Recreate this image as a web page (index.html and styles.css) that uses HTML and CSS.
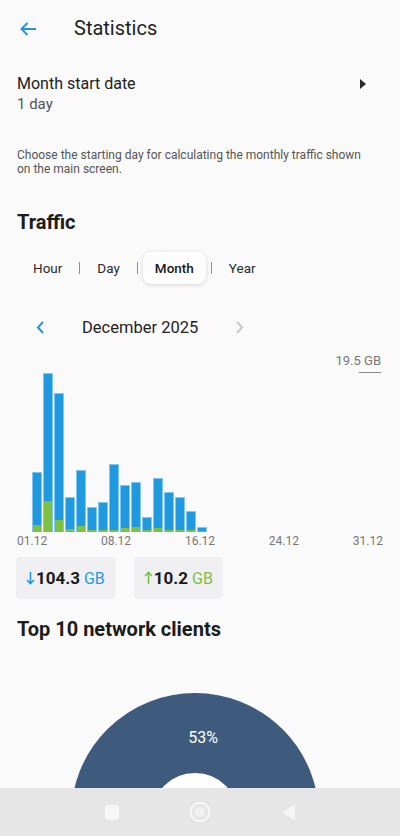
FILE: index.html
```html
<!DOCTYPE html>
<html lang="en">
<head>
<meta charset="utf-8">
<title>Statistics</title>
<link rel="stylesheet" href="styles.css">
</head>
<body>
<header class="appbar">
  <svg class="back" width="18" height="14" viewBox="0 0 18 14"><path d="M17 7H2.5M8.5 1L2.5 7l6 6" fill="none" stroke="#2594d9" stroke-width="2"/></svg>
  <h1 class="title">Statistics</h1>
</header>

<section class="setting">
  <div class="setting-text">
    <div class="setting-name">Month start date</div>
    <div class="setting-value">1 day</div>
  </div>
  <svg class="caret" width="6" height="10" viewBox="0 0 6 10"><polygon points="0,0 6,5 0,10" fill="#2b2b2b"/></svg>
</section>
<p class="hint">Choose the starting day for calculating the monthly traffic shown on the main screen.</p>

<h2 class="section-title traffic">Traffic</h2>
<nav class="tabs">
  <span class="tab">Hour</span><span class="sep"></span>
  <span class="tab">Day</span><span class="sep"></span>
  <span class="tab active">Month</span><span class="sep"></span>
  <span class="tab">Year</span>
</nav>

<div class="period">
  <svg class="chev" width="9" height="13" viewBox="0 0 9 13"><polyline points="7,1 2,6.5 7,12" fill="none" stroke="#2594d9" stroke-width="2"/></svg>
  <span class="period-label">December 2025</span>
  <svg class="chev next" width="9" height="13" viewBox="0 0 9 13"><polyline points="2,1 7,6.5 2,12" fill="none" stroke="#c9cacf" stroke-width="2"/></svg>
</div>

<div class="chart">
  <div class="ymax"><span class="ymax-label">19.5 GB</span></div>
  <div class="plot">
    <div class="bar" style="height:60px"><div class="up" style="height:7px"></div></div>
    <div class="bar" style="height:159px"><div class="up" style="height:31px"></div></div>
    <div class="bar" style="height:139px"><div class="up" style="height:12px"></div></div>
    <div class="bar" style="height:35px"><div class="up" style="height:3px"></div></div>
    <div class="bar" style="height:62px"><div class="up" style="height:6px"></div></div>
    <div class="bar" style="height:25px"><div class="up" style="height:2px"></div></div>
    <div class="bar" style="height:30px"><div class="up" style="height:2px"></div></div>
    <div class="bar" style="height:68px"><div class="up" style="height:2px"></div></div>
    <div class="bar" style="height:47px"><div class="up" style="height:4px"></div></div>
    <div class="bar" style="height:50px"><div class="up" style="height:5px"></div></div>
    <div class="bar" style="height:15px"><div class="up" style="height:2px"></div></div>
    <div class="bar" style="height:54px"><div class="up" style="height:4px"></div></div>
    <div class="bar" style="height:40px"><div class="up" style="height:2px"></div></div>
    <div class="bar" style="height:35px"><div class="up" style="height:2px"></div></div>
    <div class="bar" style="height:21px"><div class="up" style="height:2px"></div></div>
    <div class="bar" style="height:5px"><div class="up" style="height:1px"></div></div>
  </div>
  <div class="xlabels">
    <span>01.12</span><span>08.12</span><span>16.12</span><span>24.12</span><span>31.12</span>
  </div>
</div>

<div class="totals">
  <div class="total">
    <svg class="arrow" width="9" height="14" viewBox="0 0 9 14"><path d="M4.5 1v11.5M1 9l3.5 3.6L8 9" fill="none" stroke="#2594d9" stroke-width="1.6"/></svg>
    <span class="num">104.3</span><span class="unit down">GB</span>
  </div>
  <div class="total">
    <svg class="arrow" width="9" height="14" viewBox="0 0 9 14"><path d="M4.5 13V1.5M1 5l3.5-3.6L8 5" fill="none" stroke="#7cc142" stroke-width="1.6"/></svg>
    <span class="num">10.2</span><span class="unit upc">GB</span>
  </div>
</div>

<h2 class="section-title clients">Top 10 network clients</h2>
<div class="donut-wrap">
  <svg class="donut" width="400" height="200" viewBox="0 0 400 200">
    <circle cx="195" cy="176" r="44" fill="#ffffff"/>
    <circle cx="195" cy="176" r="84" fill="none" stroke="#3e5a7d" stroke-width="80"/>
    <text x="203" y="102" text-anchor="middle" class="pct">53%</text>
  </svg>
</div>

<footer class="navbar">
  <span class="nav-item"><svg width="16" height="17" viewBox="0 0 16 17"><rect x="1" y="1" width="14" height="15" rx="2" fill="#f6f6f6"/></svg></span>
  <span class="nav-item"><svg width="24" height="24" viewBox="0 0 24 24"><circle cx="12" cy="12" r="9.3" fill="none" stroke="#f6f6f6" stroke-width="2.4"/><circle cx="12" cy="12" r="5.6" fill="#f1f1f1"/></svg></span>
  <span class="nav-item"><svg width="15" height="19" viewBox="0 0 15 19"><polygon points="14,1 14,18 1,9.5" fill="#f6f6f6"/></svg></span>
</footer>
</body>
</html>
```

FILE: styles.css
```css
* { box-sizing: border-box; }
html, body { margin: 0; padding: 0; }
body {
  background: #fafafa;
  font-family: Roboto, "Noto Sans", "Liberation Sans", sans-serif;
  color: #212121;
  overflow: hidden;
  height: 836px;
}

.appbar {
  height: 56px;
  display: flex;
  align-items: center;
  padding-left: 19px;
}
.back { margin-right: 37px; margin-top: 2px; }
.title {
  margin: 0;
  font-size: 20px;
  font-weight: 400;
  color: #1f1f1f;
}

.setting {
  display: flex;
  align-items: flex-start;
  justify-content: space-between;
  padding: 18px 34px 0 17px;
}
.setting-name { font-size: 16px; line-height: 20px; color: #222; }
.setting-value { font-size: 15px; line-height: 20px; color: #555; }
.caret { margin-top: 5px; }

.hint {
  margin: 34px 32px 0 17px;
  font-size: 12px;
  line-height: 14px;
  color: #555;
}

.section-title {
  margin: 0;
  padding-left: 17px;
  font-size: 20px;
  line-height: 24px;
  font-weight: 700;
  color: #1c1c1c;
}
.traffic { margin-top: 34px; }

.tabs {
  display: flex;
  align-items: center;
  height: 31px;
  margin-top: 18px;
  padding-left: 21px;
}
.tab {
  font-size: 13.5px;
  line-height: 31px;
  padding: 1px 12px 0;
  color: #2a2a2a;
}
.tab.active {
  font-weight: 500;
  background: #fdfdfe;
  border-radius: 8px;
  box-shadow: 0 1px 4px rgba(0, 0, 0, 0.16);
  color: #1a1a1a;
}
.sep {
  width: 1px;
  height: 12px;
  background: #8f8f8f;
  margin: 1px 5px 0;
}

.period {
  display: flex;
  align-items: center;
  height: 24px;
  margin-top: 32px;
  padding-left: 36px;
}
.period-label {
  font-size: 16.5px;
  color: #222;
  margin: 0 37px 0 37px;
}

.chart { margin-top: 14px; }
.ymax {
  display: flex;
  justify-content: flex-end;
  padding-right: 19px;
}
.ymax-label {
  font-size: 13px;
  line-height: 16px;
  color: #777;
  display: flex;
  flex-direction: column;
  align-items: flex-end;
}
.ymax-label::after {
  content: "";
  width: 22px;
  height: 1px;
  background: #888;
  margin-top: 3px;
}
.plot {
  height: 159px;
  display: grid;
  grid-template-columns: repeat(31, 10px);
  column-gap: 1px;
  align-items: end;
  padding-left: 32px;
}
.bar {
  background: #1f9ae0;
  border: 1px solid rgba(255, 255, 255, 0.45);
  border-bottom: none;
  display: flex;
  flex-direction: column;
  justify-content: flex-end;
}
.up { background: #7cc142; }

.xlabels {
  display: flex;
  justify-content: space-between;
  padding: 0 17px;
  margin-top: 2px;
  font-size: 12px;
  line-height: 14px;
  color: #777;
}

.totals {
  display: flex;
  gap: 19px;
  margin-top: 9px;
  padding-left: 16px;
}
.total {
  height: 42px;
  display: flex;
  align-items: center;
  padding: 0 10px;
  background: #f0f0f2;
  border-radius: 4px;
}
.arrow { margin-right: 1px; margin-top: -1px; }
.num { font-size: 17px; font-weight: 700; color: #1a1a1a; }
.unit { font-size: 16px; margin-left: 4px; }
.unit.down { color: #2a9ae0; }
.unit.upc { color: #7cc142; }

.clients { margin-top: 18px; }

.donut-wrap { height: 200px; }
.donut { display: block; }
.pct {
  font-family: Roboto, "Noto Sans", sans-serif;
  font-size: 16px;
  fill: #ffffff;
}

.navbar {
  position: fixed;
  left: 0;
  right: 0;
  bottom: 0;
  height: 48px;
  background: #e6e6e6;
  display: flex;
  justify-content: center;
  align-items: center;
}
.nav-item {
  width: 88px;
  display: flex;
  justify-content: center;
  align-items: center;
}
.nav-item svg { filter: drop-shadow(0 0.5px 0.6px rgba(0,0,0,0.12)); }
```
